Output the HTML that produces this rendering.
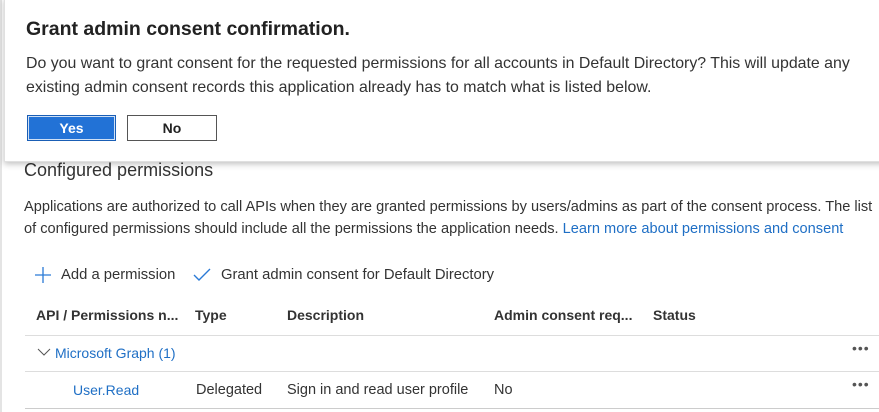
<!DOCTYPE html>
<html><head><style>
body{margin:0;width:879px;height:412px;overflow:hidden;background:#fff;font-family:"Liberation Sans",sans-serif;color:#222;position:relative}
.a{position:absolute;white-space:nowrap}
.lk{color:#1f6fc5}
</style></head><body>
<div class="a" style="left:0;top:0;width:2px;height:412px;background:#e4e4e4"></div>
<div class="a" style="left:24px;top:160px;font-size:18px;color:#333">Configured permissions</div>
<div class="a" style="left:24px;top:196px;font-size:14.6px;line-height:22px;color:#333">Applications are authorized to call APIs when they are granted permissions by users/admins as part of the consent process. The list<br>of configured permissions should include all the permissions the application needs. <span class="lk">Learn more about permissions and consent</span></div>
<svg class="a" style="left:34px;top:266px" width="18" height="18"><path d="M9 1V17M1 9H17" stroke="#2a7ad6" stroke-width="1.3"/></svg>
<div class="a" style="left:61px;top:267px;font-size:14.8px;color:#333">Add a permission</div>
<svg class="a" style="left:192px;top:267px" width="20" height="16"><path d="M2 8L7 13L18 2" stroke="#2a7ad6" stroke-width="1.4" fill="none"/></svg>
<div class="a" style="left:221px;top:267px;font-size:14.8px;color:#333">Grant admin consent for Default Directory</div>
<div class="a" style="left:36px;top:307px;font-size:14px;font-weight:bold;color:#333">API / Permissions n...</div>
<div class="a" style="left:195px;top:307px;font-size:14px;font-weight:bold;color:#333">Type</div>
<div class="a" style="left:287px;top:307px;font-size:14px;font-weight:bold;color:#333">Description</div>
<div class="a" style="left:494px;top:307px;font-size:14px;font-weight:bold;color:#333">Admin consent req...</div>
<div class="a" style="left:653px;top:307px;font-size:14px;font-weight:bold;color:#333">Status</div>
<div class="a" style="left:25px;top:335px;width:854px;height:1px;background:#ddd"></div>
<svg class="a" style="left:37px;top:347px" width="14" height="10"><path d="M1 2L7 8L13 2" stroke="#555" fill="none"/></svg>
<div class="a lk" style="left:55px;top:345px;font-size:14px">Microsoft Graph (1)</div>
<div class="a" style="left:852px;top:340px;font-size:14px;color:#555;letter-spacing:1px">•••</div>
<div class="a" style="left:25px;top:371px;width:854px;height:1px;background:#ddd"></div>
<div class="a lk" style="left:73px;top:382px;font-size:14px">User.Read</div>
<div class="a" style="left:196px;top:382px;font-size:14.5px;color:#333">Delegated</div>
<div class="a" style="left:287px;top:382px;font-size:14.5px;color:#333">Sign in and read user profile</div>
<div class="a" style="left:494px;top:382px;font-size:14.5px;color:#333">No</div>
<div class="a" style="left:852px;top:376px;font-size:14px;color:#555;letter-spacing:1px">•••</div>
<div class="a" style="left:25px;top:408px;width:854px;height:1px;background:#ccc"></div>
<div class="a" style="left:4px;top:-2px;width:880px;height:162px;background:#fff;box-shadow:0 2px 6px rgba(0,0,0,.25);border:1px solid #e0e0e0">
<div class="a" style="left:21px;top:19px;font-size:19.5px;font-weight:600;color:#222">Grant admin consent confirmation.</div>
<div class="a" style="left:21px;top:53px;font-size:15.9px;line-height:24px;color:#333">Do you want to grant consent for the requested permissions for all accounts in Default Directory? This will update any<br>existing admin consent records this application already has to match what is listed below.</div>
<div class="a" style="left:22px;top:116px;width:87px;height:24px;background:#2272d6;border:1px solid #1a5eb5;box-shadow:inset 0 0 0 1px #cfe0f5;color:#fff;font-weight:bold;font-size:14px;text-align:center;line-height:24px">Yes</div>
<div class="a" style="left:122px;top:116px;width:88px;height:24px;border:1px solid #555;color:#222;font-weight:bold;font-size:14px;text-align:center;line-height:24px">No</div>
</div>
</body></html>
